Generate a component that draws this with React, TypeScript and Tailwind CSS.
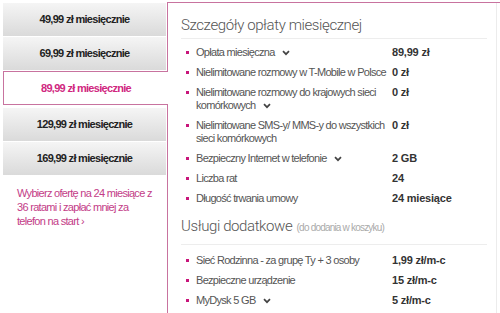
import React from "react";

const plans = ["49,99", "69,99", "89,99", "129,99", "169,99"];
const selected = "89,99";

const details = [
  { label: "Opłata miesięczna", value: "89,99 zł", more: true },
  { label: "Nielimitowane rozmowy w T-Mobile w Polsce", value: "0 zł" },
  { label: "Nielimitowane rozmowy do krajowych sieci komórkowych", value: "0 zł", more: true },
  { label: "Nielimitowane SMS-y/ MMS-y do wszystkich sieci komórkowych", value: "0 zł" },
  { label: "Bezpieczny Internet w telefonie", value: "2 GB", more: true },
  { label: "Liczba rat", value: "24" },
  { label: "Długość trwania umowy", value: "24 miesiące" },
];

const extras = [
  { label: "Sieć Rodzinna - za grupę Ty + 3 osoby", value: "1,99 zł/m-c" },
  { label: "Bezpieczne urządzenie", value: "15 zł/m-c" },
  { label: "MyDysk 5 GB", value: "5 zł/m-c", more: true },
];

function Chevron() {
  return (
    <svg width="8" height="6" viewBox="0 0 8 6" className="ml-[7px] inline-block align-middle">
      <path d="M1 1.2 L4 4.2 L7 1.2" fill="none" stroke="#444" strokeWidth="1.7" />
    </svg>
  );
}

function Row({ label, value, more }: { label: string; value: string; more?: boolean }) {
  return (
    <li className="flex items-start py-[3px] mb-px leading-[13px]">
      <span className="mt-[5px] ml-[5px] mr-[7px] h-[3px] w-[3px] shrink-0 bg-[#c8157a]" />
      <span className="w-[196px] shrink-0 pr-[6px] text-[#555]">
        {label}
        {more && <Chevron />}
      </span>
      <span className="font-bold tracking-[-0.2px] text-[#333]">{value}</span>
    </li>
  );
}

export default function App() {
  return (
    <main className="flex h-[313px] w-[500px] overflow-hidden bg-white font-['Liberation_Sans',Arial,sans-serif] text-[11px] tracking-[-0.7px]">
      {/* Plan tabs */}
      <div className="w-[167px] shrink-0 pl-[3px] pt-[3px]">
        {plans.map((p, i) =>
          p === selected ? (
            <div
              key={i}
              className="relative z-10 mt-px flex h-[34px] w-[165px] items-center justify-center border border-r-0 border-[#c8739f] bg-white font-bold text-[#d0287f]"
            >
              {p} zł miesięcznie
            </div>
          ) : (
            <div
              key={i}
              className={`flex h-[33px] w-[163px] items-center justify-center bg-linear-to-b from-[#f5f5f5] to-[#dadada] font-bold text-[#222] ${
                i === 0 ? "" : i === 3 ? "mt-[3px]" : "mt-px"
              }`}
            >
              {p} zł miesięcznie
            </div>
          )
        )}
        <p className="mt-[11px] pl-[14px] leading-[14px] text-[#c33c87]">
          Wybierz ofertę na 24 miesiące z
          <br />
          36 ratami i zapłać mniej za
          <br />
          telefon na start ›
        </p>
      </div>

      {/* Details panel */}
      <div className="mt-[2px] flex-1 border-l border-t border-[#c8739f]">
        <div className="mr-[3px] h-full border-r border-[#ececec] pl-[13px] pr-[9px] pt-[12px]">
          <h2 className="border-b border-[#ededed] pb-[3px] font-['Roboto',sans-serif] text-[15px] font-light leading-[20px] tracking-[-0.4px] text-[#555]">
            Szczegóły opłaty miesięcznej
          </h2>
          <ul className="mt-[4px]">
            {details.map((d, i) => (
              <Row key={i} {...d} />
            ))}
          </ul>

          <h2 className="mt-[8px] border-b border-[#ededed] pb-[6px] font-['Roboto',sans-serif] text-[15px] font-light leading-[20px] tracking-[-0.4px] text-[#555]">
            Usługi dodatkowe{" "}
            <span className="ml-[1px] font-['Liberation_Sans',Arial,sans-serif] text-[10px] font-normal tracking-[-0.8px] text-[#aaa]">
              (do dodania w koszyku)
            </span>
          </h2>
          <ul className="mt-[6px]">
            {extras.map((d, i) => (
              <Row key={i} {...d} />
            ))}
          </ul>
        </div>
      </div>
    </main>
  );
}
